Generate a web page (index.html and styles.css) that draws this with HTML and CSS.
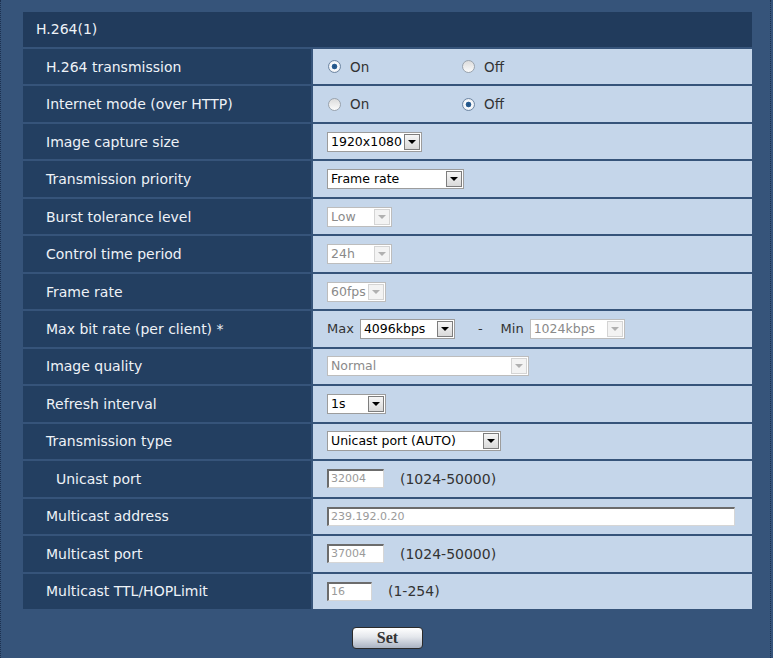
FILE: index.html
```html
<!DOCTYPE html>
<html lang="en">
<head>
    <meta charset="UTF-8">
    <title>H.264(1)</title>
    <link rel="stylesheet" href="styles.css">
</head>
<body>
    <div class="frame">
        <div class="panel">
            <div class="panel-title">H.264(1)</div>
            <div class="settings">

                <div class="label">H.264 transmission</div>
                <div class="value">
                    <label class="choice"><span class="radio checked"></span>On</label>
                    <label class="choice"><span class="radio"></span>Off</label>
                </div>

                <div class="label">Internet mode (over HTTP)</div>
                <div class="value">
                    <label class="choice"><span class="radio"></span>On</label>
                    <label class="choice"><span class="radio checked"></span>Off</label>
                </div>

                <div class="label">Image capture size</div>
                <div class="value">
                    <div class="select sel-lg"><span class="select-text">1920x1080</span><span class="select-arrow"></span></div>
                </div>

                <div class="label">Transmission priority</div>
                <div class="value">
                    <div class="select sel-xl"><span class="select-text">Frame rate</span><span class="select-arrow"></span></div>
                </div>

                <div class="label">Burst tolerance level</div>
                <div class="value">
                    <div class="select sel-md disabled"><span class="select-text">Low</span><span class="select-arrow"></span></div>
                </div>

                <div class="label">Control time period</div>
                <div class="value">
                    <div class="select sel-md disabled"><span class="select-text">24h</span><span class="select-arrow"></span></div>
                </div>

                <div class="label">Frame rate</div>
                <div class="value">
                    <div class="select sel-sm disabled"><span class="select-text">60fps</span><span class="select-arrow"></span></div>
                </div>

                <div class="label">Max bit rate (per client) *</div>
                <div class="value">
                    <span class="field-name">Max</span>
                    <div class="select sel-lg"><span class="select-text">4096kbps</span><span class="select-arrow"></span></div>
                    <span class="dash">-</span>
                    <span class="field-name">Min</span>
                    <div class="select sel-lg disabled"><span class="select-text">1024kbps</span><span class="select-arrow"></span></div>
                </div>

                <div class="label">Image quality</div>
                <div class="value">
                    <div class="select sel-wide disabled"><span class="select-text">Normal</span><span class="select-arrow"></span></div>
                </div>

                <div class="label">Refresh interval</div>
                <div class="value">
                    <div class="select sel-sm"><span class="select-text">1s</span><span class="select-arrow"></span></div>
                </div>

                <div class="label">Transmission type</div>
                <div class="value">
                    <div class="select sel-xxl"><span class="select-text">Unicast port (AUTO)</span><span class="select-arrow"></span></div>
                </div>

                <div class="label sub">Unicast port</div>
                <div class="value">
                    <span class="textbox port">32004</span>
                    <span class="range">(1024-50000)</span>
                </div>

                <div class="label">Multicast address</div>
                <div class="value">
                    <span class="textbox address">239.192.0.20</span>
                </div>

                <div class="label">Multicast port</div>
                <div class="value">
                    <span class="textbox port">37004</span>
                    <span class="range">(1024-50000)</span>
                </div>

                <div class="label">Multicast TTL/HOPLimit</div>
                <div class="value">
                    <span class="textbox ttl">16</span>
                    <span class="range">(1-254)</span>
                </div>

            </div>
        </div>
        <div class="actions">
            <button class="set-button">Set</button>
        </div>
    </div>
</body>
</html>
```

FILE: styles.css
```css
body {
    margin: 0;
    padding: 0;
    background: #36547a;
    font-family: "DejaVu Sans", Verdana, sans-serif;
}
.frame {
    width: 771px;
    height: 658px;
    box-sizing: border-box;
    border-left: 1px dotted #1c3150;
    border-right: 1px dotted #1c3150;
    padding: 12px 0 0 22px;
}
.panel {
    width: 729px;
}
.panel-title {
    height: 35px;
    background: #213b5c;
    color: #eef2f7;
    font-size: 14px;
    line-height: 35px;
    padding-left: 13px;
    margin-bottom: 2px;
}
.settings {
    display: grid;
    grid-template-columns: 288px 1fr;
    grid-auto-rows: 1fr;
    column-gap: 2px;
    row-gap: 2px;
    height: 560px;
}
.label {
    background: #233f61;
    color: #eef2f7;
    font-size: 14px;
    display: flex;
    align-items: center;
    padding-left: 23px;
}
.label.sub {
    padding-left: 33px;
}
.value {
    background: #c5d6ea;
    color: #333;
    font-size: 13.5px;
    display: flex;
    align-items: center;
    padding-left: 14px;
}
.choice {
    width: 134px;
    display: flex;
    align-items: center;
}
.radio {
    width: 11px;
    height: 11px;
    border: 1px solid #9aa3ad;
    border-radius: 50%;
    background: linear-gradient(#dcdcdc, #fbfbfb);
    margin: 0 9px 0 1px;
}
.radio.checked {
    border-color: #6f87a3;
    background: radial-gradient(circle, #1f4f80 0, #2f6296 2.5px, #ffffff 3.2px, #e4e8ee 6px);
}
.select {
    display: flex;
    height: 20px;
    box-sizing: border-box;
    border: 1px solid #9c9c9c;
    background: #fff;
}
.select-text {
    flex: 1;
    font-size: 12.5px;
    line-height: 18px;
    padding-left: 3px;
    color: #000;
    white-space: nowrap;
    overflow: hidden;
}
.select-arrow {
    width: 14px;
    margin: 1px;
    border: 1px solid #7d7d7d;
    background: linear-gradient(#f6f6f6, #d9d9d9);
    display: flex;
    align-items: center;
    justify-content: center;
}
.select-arrow::after {
    content: "";
    border-left: 4px solid transparent;
    border-right: 4px solid transparent;
    border-top: 4px solid #000;
}
.select.disabled {
    border-color: #bdbdbd;
}
.select.disabled .select-text {
    color: #8a8a8a;
}
.select.disabled .select-arrow {
    border-color: #d4d4d4;
    background: #f3f3f3;
}
.select.disabled .select-arrow::after {
    border-top-color: #b0b0b0;
}
.sel-sm { width: 59px; }
.sel-md { width: 65px; }
.sel-lg { width: 95px; }
.sel-xl { width: 137px; }
.sel-xxl { width: 174px; }
.sel-wide { width: 202px; }
.field-name {
    font-size: 13px;
    margin-right: 6px;
}
.dash {
    font-size: 13px;
    margin: 0 18px 0 23px;
}
.textbox {
    display: block;
    height: 19px;
    box-sizing: border-box;
    background: #fff;
    border-top: 2px solid #6c6c6c;
    border-left: 2px solid #6c6c6c;
    border-right: 1px solid #d6d6d6;
    border-bottom: 1px solid #d6d6d6;
    color: #9a9a9a;
    font-size: 11px;
    line-height: 16px;
    padding-left: 2px;
}
.textbox.port { width: 57px; }
.textbox.address { width: 408px; }
.textbox.ttl { width: 45px; }
.range {
    font-size: 14px;
    margin-left: 16px;
}
.actions {
    width: 729px;
    display: flex;
    justify-content: center;
    padding-top: 18px;
}
.set-button {
    width: 71px;
    height: 22px;
    border: 1px solid #2b2b2b;
    border-radius: 4px;
    background: linear-gradient(#ffffff 0%, #e4e7ec 45%, #aab3c2 100%);
    color: #333;
    font-family: "Liberation Serif", serif;
    font-weight: bold;
    font-size: 16px;
    line-height: 18px;
    padding: 0;
    cursor: pointer;
}
```
